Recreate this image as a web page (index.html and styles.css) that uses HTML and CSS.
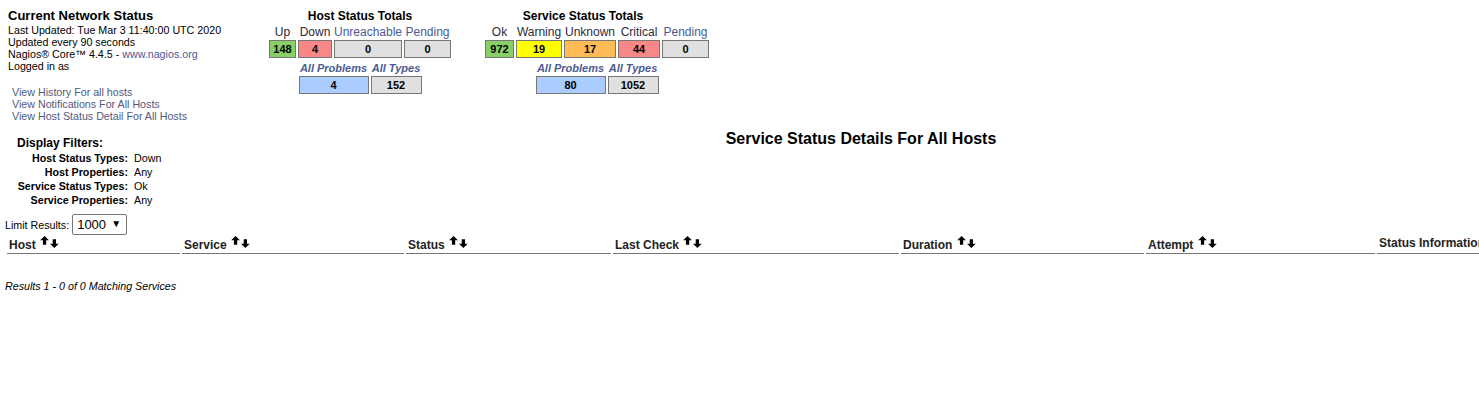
FILE: index.html
```html
<!DOCTYPE html>
<html lang="en">
<head>
  <meta charset="UTF-8" />
  <title>Current Network Status</title>
  <link rel="stylesheet" href="styles.css">
</head>
<body>
  <header class="top-row">
    <div class="info-box">
      <div class="info-title">Current Network Status</div>
      <div>Last Updated: Tue Mar 3 11:40:00 UTC 2020</div>
      <div>Updated every 90 seconds</div>
      <div>Nagios&reg; Core&trade; 4.4.5 - <a href="#" class="link">www.nagios.org</a></div>
      <div>Logged in as </div>
      <ul class="info-links">
        <li><a href="#" class="link">View History For all hosts</a></li>
        <li><a href="#" class="link">View Notifications For All Hosts</a></li>
        <li><a href="#" class="link">View Host Status Detail For All Hosts</a></li>
      </ul>
    </div>

    <section class="totals host-totals">
      <div class="totals-title">Host Status Totals</div>
      <div class="totals-grid host-grid">
        <a href="#" class="totals-label dark">Up</a>
        <a href="#" class="totals-label dark">Down</a>
        <a href="#" class="totals-label">Unreachable</a>
        <a href="#" class="totals-label">Pending</a>
        <div class="count count-ok">148</div>
        <div class="count count-critical">4</div>
        <div class="count">0</div>
        <div class="count">0</div>
      </div>
      <div class="totals-grid summary-grid">
        <a href="#" class="summary-label">All Problems</a>
        <a href="#" class="summary-label">All Types</a>
        <div class="count count-problem">4</div>
        <div class="count">152</div>
      </div>
    </section>

    <section class="totals service-totals">
      <div class="totals-title">Service Status Totals</div>
      <div class="totals-grid service-grid">
        <a href="#" class="totals-label dark">Ok</a>
        <a href="#" class="totals-label dark">Warning</a>
        <a href="#" class="totals-label dark">Unknown</a>
        <a href="#" class="totals-label dark">Critical</a>
        <a href="#" class="totals-label">Pending</a>
        <div class="count count-ok">972</div>
        <div class="count count-warning">19</div>
        <div class="count count-unknown">17</div>
        <div class="count count-critical">44</div>
        <div class="count">0</div>
      </div>
      <div class="totals-grid summary-grid">
        <a href="#" class="summary-label">All Problems</a>
        <a href="#" class="summary-label">All Types</a>
        <div class="count count-problem">80</div>
        <div class="count">1052</div>
      </div>
    </section>
  </header>

  <div class="filter-row">
    <div class="filters">
      <div class="filters-title">Display Filters:</div>
      <dl class="filters-list">
        <dt>Host Status Types:</dt><dd>Down</dd>
        <dt>Host Properties:</dt><dd>Any</dd>
        <dt>Service Status Types:</dt><dd>Ok</dd>
        <dt>Service Properties:</dt><dd>Any</dd>
      </dl>
    </div>
    <h1 class="page-title">Service Status Details For All Hosts</h1>
  </div>

  <div class="limit-row">
    <label for="limit">Limit Results:</label>
    <div class="select-wrap">
      <select id="limit" class="limit-select">
        <option>1000</option>
      </select>
      <span class="select-arrow">&#9660;</span>
    </div>
  </div>

  <div class="status-table">
    <div class="th">Host <svg class="sort" viewBox="0 0 18 11"><path d="M4 0 L8 4 L5.5 4 L5.5 8 L2.5 8 L2.5 4 L0 4 Z"/><path d="M13 11 L17 7 L14.5 7 L14.5 3 L11.5 3 L11.5 7 L9 7 Z"/></svg></div>
    <div class="th">Service <svg class="sort" viewBox="0 0 18 11"><path d="M4 0 L8 4 L5.5 4 L5.5 8 L2.5 8 L2.5 4 L0 4 Z"/><path d="M13 11 L17 7 L14.5 7 L14.5 3 L11.5 3 L11.5 7 L9 7 Z"/></svg></div>
    <div class="th">Status <svg class="sort" viewBox="0 0 18 11"><path d="M4 0 L8 4 L5.5 4 L5.5 8 L2.5 8 L2.5 4 L0 4 Z"/><path d="M13 11 L17 7 L14.5 7 L14.5 3 L11.5 3 L11.5 7 L9 7 Z"/></svg></div>
    <div class="th">Last Check <svg class="sort" viewBox="0 0 18 11"><path d="M4 0 L8 4 L5.5 4 L5.5 8 L2.5 8 L2.5 4 L0 4 Z"/><path d="M13 11 L17 7 L14.5 7 L14.5 3 L11.5 3 L11.5 7 L9 7 Z"/></svg></div>
    <div class="th">Duration <svg class="sort" viewBox="0 0 18 11"><path d="M4 0 L8 4 L5.5 4 L5.5 8 L2.5 8 L2.5 4 L0 4 Z"/><path d="M13 11 L17 7 L14.5 7 L14.5 3 L11.5 3 L11.5 7 L9 7 Z"/></svg></div>
    <div class="th">Attempt <svg class="sort" viewBox="0 0 18 11"><path d="M4 0 L8 4 L5.5 4 L5.5 8 L2.5 8 L2.5 4 L0 4 Z"/><path d="M13 11 L17 7 L14.5 7 L14.5 3 L11.5 3 L11.5 7 L9 7 Z"/></svg></div>
    <div class="th">Status Information</div>
  </div>

  <p class="results">Results 1 - 0 of 0 Matching Services</p>
</body>
</html>
```

FILE: styles.css
```css
html {
  overflow: hidden;
}

body {
  margin: 0;
  padding: 8px 0 0 5px;
  font-family: 'Liberation Sans', Arial, sans-serif;
  font-size: 10.7px;
  color: #000;
  background: #fff;
}

a {
  text-decoration: none;
}

.link {
  color: #4b5a93;
}

/* top row */
.top-row {
  display: flex;
  align-items: flex-start;
}

.info-box {
  width: 261px;
  padding-left: 3px;
  line-height: 12px;
}

.info-title {
  font-size: 13px;
  font-weight: bold;
  line-height: 16px;
}

.info-links {
  list-style: none;
  margin: 14px 0 0;
  padding: 0 0 0 4px;
}

.info-links .link {
  color: #515a80;
}

.totals {
  text-align: center;
}

.host-totals {
  width: 182px;
}

.service-totals {
  width: 224px;
  margin-left: 34px;
}

.totals-title {
  font-size: 12px;
  font-weight: bold;
  line-height: 16px;
}

.service-totals .totals-title {
  padding-right: 28px;
}

.totals-grid {
  display: grid;
  column-gap: 2px;
  justify-content: center;
}

.host-grid {
  grid-template-columns: 27px 34px 68px 47px;
}

.service-grid {
  grid-template-columns: 29px 46px 52px 42px 47px;
}

.summary-grid {
  grid-template-columns: 70px 51px;
  margin-top: 2px;
}

.totals-label {
  font-size: 12px;
  line-height: 16px;
  color: #4b5a93;
  white-space: nowrap;
}

.totals-label.dark {
  color: #2e2a3a;
}

.summary-label {
  font-size: 11px;
  font-style: italic;
  font-weight: bold;
  line-height: 16px;
  color: #4b5a93;
  white-space: nowrap;
}

.count {
  box-sizing: border-box;
  height: 18px;
  line-height: 16px;
  border: 1px solid #777;
  background: #e0e0e0;
  font-size: 11px;
  font-weight: bold;
}

.count-ok { background: #88d066; }
.count-critical { background: #f88888; }
.count-warning { background: #ffff00; }
.count-unknown { background: #ffbb55; }
.count-problem { background: #aaccff; }

/* filters + title */
.filter-row {
  display: flex;
  align-items: flex-start;
}

.filters {
  width: 238px;
  flex-shrink: 0;
}

.filters-title {
  font-size: 12px;
  font-weight: bold;
  line-height: 16px;
  padding-left: 12px;
  margin-top: 13px;
}

.filters-list {
  display: grid;
  grid-template-columns: 123px auto;
  column-gap: 6px;
  margin: 0;
  line-height: 14px;
}

.filters-list dt {
  text-align: right;
  font-weight: bold;
}

.filters-list dd {
  margin: 0;
}

.page-title {
  flex: 1;
  margin: 7px 0 0;
  text-align: center;
  font-size: 16px;
  line-height: 20px;
}

/* limit results */
.limit-row {
  display: flex;
  align-items: center;
  gap: 3px;
  margin-top: 7px;
  height: 21px;
}

.select-wrap {
  position: relative;
}

.limit-select {
  appearance: none;
  -webkit-appearance: none;
  box-sizing: border-box;
  width: 55px;
  height: 21px;
  padding: 0 0 0 4px;
  border: 1px solid #767676;
  border-radius: 2px;
  background: #fff;
  font-family: 'Liberation Sans', Arial, sans-serif;
  font-size: 13px;
  color: #000;
}

.select-arrow {
  position: absolute;
  right: 6px;
  top: 5px;
  font-size: 10px;
  line-height: 10px;
  pointer-events: none;
}

/* table header */
.status-table {
  display: grid;
  grid-template-columns: 173px 222px 205px 286px 243px 229px 200px;
  column-gap: 2px;
  margin: 1px 0 0 2px;
  width: max-content;
}

.th {
  padding: 0 0 1px 2px;
  font-size: 12px;
  font-weight: bold;
  line-height: 14px;
  color: #222;
  border-bottom: 1px solid #777;
  white-space: nowrap;
}

.sort {
  width: 20px;
  height: 12px;
  margin-left: 1px;
  vertical-align: 1px;
  fill: #000;
}

.results {
  margin: 26px 0 0;
  font-style: italic;
  line-height: 12px;
}
```
